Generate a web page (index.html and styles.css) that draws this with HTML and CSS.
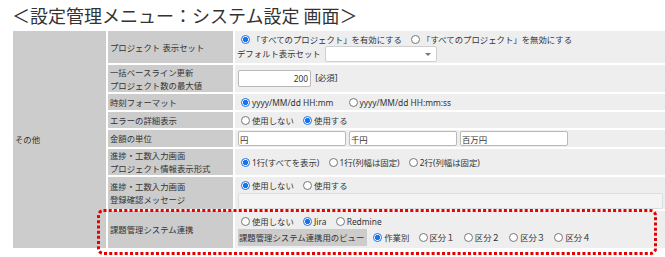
FILE: index.html
```html
<!DOCTYPE html>
<html lang="ja">
<head>
<meta charset="utf-8">
<title>システム設定</title>
<link rel="stylesheet" href="styles.css">
</head>
<body>
<h1 class="title">＜設定管理メニュー：システム設定 画面＞</h1>
<table class="settings">
  <colgroup><col class="c1"><col class="c2"><col class="c3"></colgroup>
  <tr class="r1">
    <td class="group" rowspan="8">その他</td>
    <td class="label">プロジェクト 表示セット</td>
    <td class="value">
      <div class="line"><label class="opt"><input class="radio" type="radio" name="allp" checked>「すべてのプロジェクト」を有効にする</label> <label class="opt"><input class="radio" type="radio" name="allp">「すべてのプロジェクト」を無効にする</label></div>
      <div class="line sel-line">デフォルト表示セット <span class="select"></span></div>
    </td>
  </tr>
  <tr class="r2">
    <td class="label">一括ベースライン更新<br>プロジェクト数の最大値</td>
    <td class="value"><input class="num" type="text" value="200"> [必須]</td>
  </tr>
  <tr class="r3">
    <td class="label">時刻フォーマット</td>
    <td class="value"><label class="opt"><input class="radio" type="radio" name="tf" checked>yyyy/MM/dd HH:mm</label> <label class="opt wide"><input class="radio" type="radio" name="tf">yyyy/MM/dd HH:mm:ss</label></td>
  </tr>
  <tr class="r4">
    <td class="label">エラーの詳細表示</td>
    <td class="value"><label class="opt"><input class="radio" type="radio" name="err">使用しない</label> <label class="opt"><input class="radio" type="radio" name="err" checked>使用する</label></td>
  </tr>
  <tr class="r5">
    <td class="label">金額の単位</td>
    <td class="value"><div class="units"><input class="unit" type="text" value="円"><input class="unit" type="text" value="千円"><input class="unit" type="text" value="百万円"></div></td>
  </tr>
  <tr class="r6">
    <td class="label">進捗・工数入力画面<br>プロジェクト情報表示形式</td>
    <td class="value"><label class="opt"><input class="radio" type="radio" name="fmt" checked>1行(すべてを表示)</label> <label class="opt"><input class="radio" type="radio" name="fmt">1行(列幅は固定)</label> <label class="opt"><input class="radio" type="radio" name="fmt">2行(列幅は固定)</label></td>
  </tr>
  <tr class="r7">
    <td class="label">進捗・工数入力画面<br>登録確認メッセージ</td>
    <td class="value top7">
      <div class="line"><label class="opt"><input class="radio" type="radio" name="msg" checked>使用しない</label> <label class="opt"><input class="radio" type="radio" name="msg">使用する</label></div>
      <textarea class="memo" disabled></textarea>
    </td>
  </tr>
  <tr class="r8">
    <td class="label">課題管理システム連携</td>
    <td class="value top8">
      <div class="line"><label class="opt"><input class="radio" type="radio" name="its">使用しない</label> <label class="opt"><input class="radio" type="radio" name="its" checked>Jira</label> <label class="opt"><input class="radio" type="radio" name="its">Redmine</label></div>
      <div class="line view-line"><span class="sub">課題管理システム連携用のビュー</span> <label class="opt"><input class="radio" type="radio" name="view" checked>作業別</label> <label class="opt"><input class="radio" type="radio" name="view">区分１</label> <label class="opt"><input class="radio" type="radio" name="view">区分２</label> <label class="opt"><input class="radio" type="radio" name="view">区分３</label> <label class="opt"><input class="radio" type="radio" name="view">区分４</label></div>
    </td>
  </tr>
</table>
<svg class="callout" width="560" height="46" viewBox="0 0 560 46" aria-hidden="true">
  <rect x="1.5" y="1.5" width="557" height="43" rx="5" ry="5" fill="none" stroke="#e60000" stroke-width="3" stroke-dasharray="3 2.2"/>
</svg>
</body>
</html>
```
FILE: styles.css
```css
html, body {
  margin: 0;
  padding: 0;
  background: #fff;
  overflow: hidden;
}
body {
  position: relative;
  width: 665px;
  height: 257px;
  font-family: "Noto Sans", "Noto Sans CJK JP", sans-serif;
  font-size: 8.4px;
  color: #333;
}
.title {
  margin: 0;
  padding: 3px 0 2px 12px;
  font-family: "Noto Sans CJK JP", sans-serif;
  font-weight: 400;
  font-size: 18px;
  line-height: 24px;
  color: #333;
  white-space: nowrap;
}
.settings {
  margin-left: 11px;
  border-collapse: separate;
  border-spacing: 2px;
  background: #fff;
  table-layout: fixed;
  width: 656px;
}
.c1 { width: 93px; }
.c2 { width: 125px; }
.c3 { width: 430px; }
.settings td {
  padding: 0;
  line-height: 13px;
  white-space: nowrap;
  vertical-align: middle;
}
.group {
  background: #ccc;
  padding-left: 2px !important;
}
.label {
  background: #ccc;
  padding-left: 2px !important;
}
.value {
  background: #eee;
  padding-left: 2px !important;
}
.r1 { height: 32px; }
.r2 { height: 27px; }
.r3 { height: 16px; }
.r4 { height: 16px; }
.r5 { height: 17px; }
.r6 { height: 26px; }
.r7 { height: 32px; }
.r8 { height: 37px; }
.line {
  height: 13px;
  line-height: 13px;
}
.sel-line {
  height: 16px;
  line-height: 16px;
  display: flex;
  align-items: center;
}
.select {
  position: relative;
  display: inline-block;
  box-sizing: border-box;
  width: 112px;
  height: 16px;
  margin-left: 4px;
  background: #fff;
  border: 1px solid #cfcfcf;
  border-radius: 2px;
}
.select::after {
  content: "";
  position: absolute;
  right: 5px;
  top: 6px;
  border-left: 3px solid transparent;
  border-right: 3px solid transparent;
  border-top: 3px solid #777;
}
.opt {
  white-space: nowrap;
}
.opt + .opt {
  margin-left: 3px;
}
.opt.wide {
  margin-left: 9px;
}
.radio {
  appearance: none;
  -webkit-appearance: none;
  box-sizing: border-box;
  width: 9px;
  height: 9px;
  margin: 0 2px 0 4px;
  border: 1px solid #777;
  border-radius: 50%;
  background: #fff;
  vertical-align: -1px;
}
.radio:checked {
  border-color: #1a73e8;
  background: radial-gradient(circle, #1a73e8 0 2.4px, #fff 2.9px);
}
.num {
  box-sizing: border-box;
  width: 73px;
  height: 17px;
  margin: 0 2px 0 1px;
  padding: 0 2px 0 2px;
  border: 1px solid #b9b9b9;
  border-radius: 2px;
  background: #fff;
  font: inherit;
  color: #333;
  text-align: right;
  vertical-align: middle;
}
.units {
  display: flex;
  gap: 3px;
  padding-left: 1px;
}
.unit {
  box-sizing: border-box;
  width: 108px;
  height: 15px;
  margin: 0;
  padding: 0 1px;
  border: 1px solid #b9b9b9;
  border-radius: 2px;
  background: #fff;
  font: inherit;
  color: #333;
}
.value.top7 {
  vertical-align: top;
  padding-top: 2px;
}
.memo {
  display: block;
  box-sizing: border-box;
  width: 425px;
  height: 16px;
  margin: 1px 0 0 1px;
  padding: 0;
  border: 1px solid #ddd;
  border-radius: 2px;
  background: #f4f4f4;
  resize: none;
  overflow: hidden;
}
.value.top8 {
  vertical-align: top;
  padding-top: 4px;
}
.view-line {
  height: 17px;
  line-height: 17px;
  margin-top: 1px;
}
.sub {
  display: inline-block;
  box-sizing: border-box;
  width: 129px;
  height: 17px;
  margin-left: 1px;
  padding-left: 1px;
  background: #ccc;
}
.callout {
  position: absolute;
  left: 97px;
  top: 209px;
  display: block;
}
```
